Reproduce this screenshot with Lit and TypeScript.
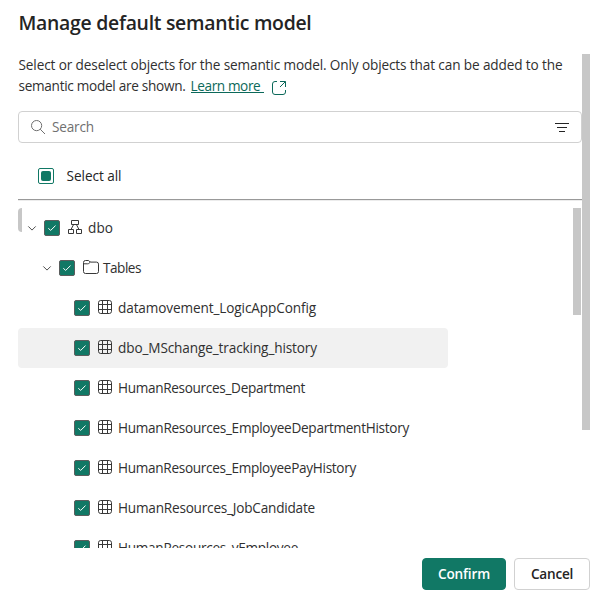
import { LitElement, html, css, svg } from "lit";
import { customElement, property } from "lit/decorators.js";

const tables = [
  { name: "datamovement_LogicAppConfig", width: 198 },
  { name: "dbo_MSchange_tracking_history", width: 199, hover: true },
  { name: "HumanResources_Department", width: 187 },
  { name: "HumanResources_EmployeeDepartmentHistory", width: 291 },
  { name: "HumanResources_EmployeePayHistory", width: 238 },
  { name: "HumanResources_JobCandidate", width: 197 },
  { name: "HumanResources_vEmployee", width: 180 },
];

const glyphs: Record<string, { w: number; h: number; body: unknown }> = {
  search: { w: 15, h: 15, body: svg`<circle cx="5.6" cy="5.6" r="5.1"/><path d="M9.2 9.2L14 14"/>` },
  filter: { w: 14, h: 11, body: svg`<path d="M0 1.5H14M2 5.5H12M4 9.5H10"/>` },
  open: { w: 14, h: 14, body: svg`<path d="M5 .5H3A2.5 2.5 0 0 0 .5 3v8A2.5 2.5 0 0 0 3 13.5h8a2.5 2.5 0 0 0 2.5-2.5V9M8 .5h5.5V6M13.3.7L8 6"/>` },
  chevron: { w: 8, h: 5, body: svg`<path d="M.3.4L4 4.1 7.7.4"/>` },
  schema: { w: 14, h: 14, body: svg`<path d="M3.5.5h7v4h-7zM.5 9.5h5v4h-5zM8.5 9.5h5v4h-5zM5.6 4.5L3 9.5M8.4 4.5L11 9.5"/>` },
  folder: { w: 16, h: 14, body: svg`<path d="M.5 2.5a2 2 0 0 1 2-2h2.6q.8 0 1.2.5l1 1.1h6.2a2 2 0 0 1 2 2v7.4a2 2 0 0 1-2 2h-11a2 2 0 0 1-2-2zM.5 3.8h4.2q.8 0 1.3-.5l1.3-1.2"/>` },
  table: { w: 14, h: 14, body: svg`<rect x=".5" y=".5" width="13" height="13" rx="2.2"/><path d="M4.5.5v13M9.5.5v13M.5 4.5h13M.5 9.5h13"/>` },
  check: { w: 8, h: 6, body: svg`<path d="M.3 3.3L2.7 5.4 7.5.6"/>` },
};

@customElement("ui-icon")
class UiIcon extends LitElement {
  @property() name = "";
  static styles = css`
    :host { display: inline-flex; flex: none; }
    svg { display: block; overflow: visible; fill: none; stroke: currentColor; stroke-width: 1; }
  `;
  render() {
    const g = glyphs[this.name];
    return html`<svg width=${g.w} height=${g.h} viewBox="0 0 ${g.w} ${g.h}">${g.body}</svg>`;
  }
}

@customElement("ui-checkbox")
class UiCheckbox extends LitElement {
  @property({ type: Boolean }) mixed = false;
  static styles = css`
    :host { flex: none; }
    .box { box-sizing: border-box; width: 16px; height: 16px; border: 1px solid #5b5d5d; border-radius: 2px; background: #117865; color: #fff; display: grid; place-items: center; }
    .mixed { background: #fff; border-color: #117865; }
    .fill { width: 10px; height: 10px; border-radius: 2px; background: #117865; }
  `;
  render() {
    return this.mixed
      ? html`<div class="box mixed"><div class="fill"></div></div>`
      : html`<div class="box"><ui-icon name="check"></ui-icon></div>`;
  }
}

// Tightens or loosens tracking so that a label fills a known advance width.
@customElement("fit-text")
class FitText extends LitElement {
  @property({ type: Number }) width = 0;
  @property() text = "";
  static styles = css`
    :host { display: inline-block; white-space: pre; }
  `;
  render() {
    return html`<span>${this.text}</span>`;
  }
  updated() {
    const span = this.renderRoot.querySelector("span")!;
    span.style.letterSpacing = "0px";
    const natural = span.getBoundingClientRect().width;
    span.style.letterSpacing = `${(this.width - natural) / this.text.length}px`;
  }
}

@customElement("app-root")
class AppRoot extends LitElement {
  static styles = css`
    :host { display: block; width: 614px; height: 610px; overflow: hidden; background: #fff; color: #242424; font: 13.6px/20px "Open Sans", "Noto Sans", sans-serif; }
    .dialog { box-sizing: border-box; height: 610px; padding: 8px 24px 20px 18px; display: flex; flex-direction: column; }
    h2 { margin: 0; height: 46px; font-size: 19.4px; line-height: 30px; font-weight: 600; padding-left: 0.5px; }
    .scroller { height: 494px; display: grid; grid-template-columns: 564px 8px; grid-template-rows: 494px; overflow: hidden; }
    .outer-thumb { height: 376px; background: #c7c7c7; }
    .content { display: flex; flex-direction: column; min-height: 0; overflow: hidden; }
    .intro { height: 57px; line-height: 21px; padding: 0 0 0 0.5px; box-sizing: border-box; flex: none; color: #303030; }
    .line { display: flex; height: 21px; }
    .link { color: #0c695a; margin-left: 5px; border-bottom: 1px solid #0c695a; height: 17px; }
    .open { color: #0c695a; margin: 6px 0 0 8.5px; height: 14px; }
    .search { box-sizing: border-box; height: 32px; border: 1px solid #d1d1d1; border-radius: 4px; padding: 0 12px 0 12px; display: flex; align-items: center; color: #707070; flex: none; }
    .search .label { margin-left: 6px; flex: 1; }
    .search .filter { color: #242424; }
    .all { height: 57px; box-sizing: border-box; padding: 10px 0 0 20px; display: flex; align-items: center; gap: 12.5px; border-bottom: 1px solid #999; box-shadow: 0 1px #ececec; flex: none; }
    .tree { margin-top: 8px; display: grid; grid-template-columns: 555px 8px; min-height: 0; overflow: hidden; position: relative; }
    .rows { min-width: 0; }
    .thumb { height: 107px; background: #c7c7c7; }
    .mark { position: absolute; left: 0; top: 0; width: 4px; height: 24px; background: #c7c7c7; border-radius: 4px 0 0 4px; }
    .row { box-sizing: border-box; width: 430px; height: 40px; display: flex; align-items: center; border-radius: 4px; color: #303030; }
    .row.hover { background: #f1f1f1; }
    .schema { padding-left: 10px; }
    .group { padding-left: 25px; }
    .leaf { padding-left: 56px; }
    .row ui-checkbox { margin-right: 8px; }
    .chev { margin-right: 8px; color: #505050; }
    .glyph { margin: 0 6px 2px 0; color: #383838; }
    .group .glyph { margin: 0 4px 2px 0; }
    .footer { display: flex; justify-content: flex-end; gap: 8px; padding-top: 10px; }
    button { box-sizing: border-box; height: 32px; width: 76px; border: 1px solid #d1d1d1; border-radius: 4px; background: #fff; color: #242424; font: 600 13.6px/20px "Open Sans", sans-serif; padding: 0; }
    .primary { width: 84px; background: #117865; border-color: #117865; color: #fff; }
  `;
  render() {
    return html`
      <div class="dialog">
        <h2><fit-text width="293" text="Manage default semantic model"></fit-text></h2>
        <div class="scroller">
          <div class="content">
            <div class="intro">
              <div class="line"><fit-text width="544" text="Select or deselect objects for the semantic model. Only objects that can be added to the"></fit-text></div>
              <div class="line">
                <fit-text width="167" text="semantic model are shown."></fit-text>
                <fit-text class="link" width="73" text="Learn more "></fit-text>
                <ui-icon class="open" name="open"></ui-icon>
              </div>
            </div>
            <div class="search">
              <ui-icon name="search"></ui-icon>
              <div class="label"><fit-text width="42" text="Search"></fit-text></div>
              <ui-icon class="filter" name="filter"></ui-icon>
            </div>
            <div class="all"><ui-checkbox mixed></ui-checkbox><fit-text width="55" text="Select all"></fit-text></div>
            <div class="tree">
              <div class="rows">
                <div class="row schema">
                  <ui-icon class="chev" name="chevron"></ui-icon><ui-checkbox></ui-checkbox>
                  <ui-icon class="glyph" name="schema"></ui-icon><fit-text width="25" text="dbo"></fit-text>
                </div>
                <div class="row group">
                  <ui-icon class="chev" name="chevron"></ui-icon><ui-checkbox></ui-checkbox>
                  <ui-icon class="glyph" name="folder"></ui-icon><fit-text width="38" text="Tables"></fit-text>
                </div>
                ${tables.map(
                  (t) => html`<div class="row leaf ${t.hover ? "hover" : ""}">
                    <ui-checkbox></ui-checkbox><ui-icon class="glyph" name="table"></ui-icon>
                    <fit-text width=${t.width} text=${t.name}></fit-text>
                  </div>`
                )}
              </div>
              <div class="thumb"></div>
              <div class="mark"></div>
            </div>
          </div>
          <div class="outer-thumb"></div>
        </div>
        <div class="footer">
          <button class="primary"><fit-text width="52" text="Confirm"></fit-text></button>
          <button><fit-text width="42" text="Cancel"></fit-text></button>
        </div>
      </div>
    `;
  }
}
